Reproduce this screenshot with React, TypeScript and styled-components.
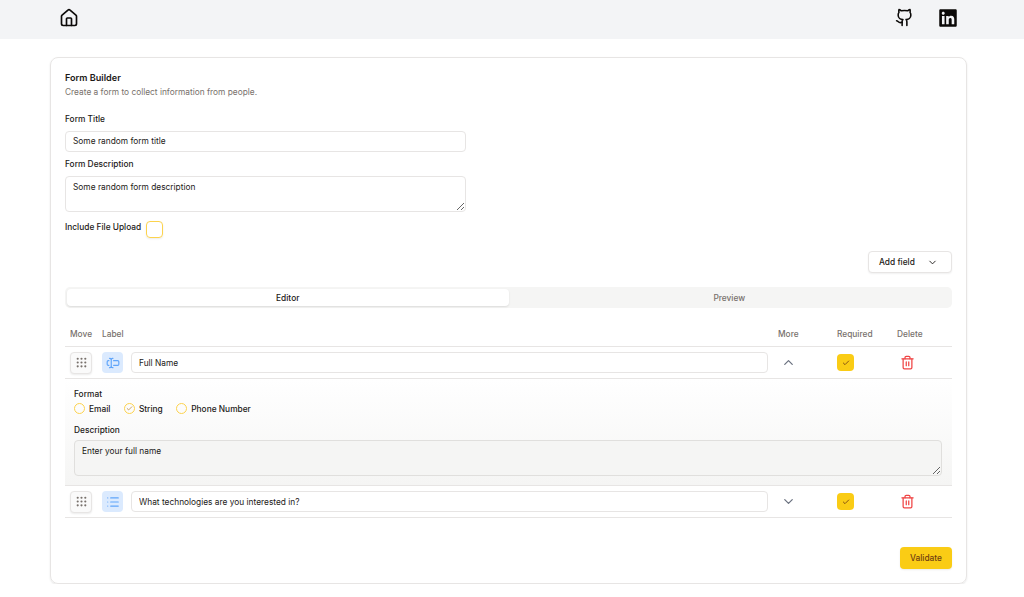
import React from 'react';
import styled, { createGlobalStyle } from 'styled-components';
import { Check, ChevronDown, ChevronUp, Grip, House, List, TextCursorInput, Trash2 } from 'lucide-react';
import { FaLinkedin } from 'react-icons/fa';

const GlobalStyle = createGlobalStyle`
  * { box-sizing: border-box; }
  html, body { margin: 0; padding: 0; background: #fff; }
  body { font-family: Inter, "Liberation Sans", sans-serif; color: #1c1917; }
`;

const GithubIcon = () => (
    <svg width="19" height="19" viewBox="0 0 24 24" fill="none" stroke="#0c0a09" strokeWidth="2" strokeLinecap="round" strokeLinejoin="round">
        <path d="M15 22v-4a4.8 4.8 0 0 0-1-3.5c3 0 6-2 6-5.5.08-1.25-.27-2.48-1-3.5.28-1.15.28-2.35 0-3.5 0 0-1 0-3 1.5-2.64-.5-5.36-.5-8 0C6 2 5 2 5 2c-.3 1.15-.3 2.35 0 3.5A5.403 5.403 0 0 0 4 9c0 3.5 3 5.5 6 5.5-.39.49-.68 1.05-.85 1.65-.17.6-.22 1.23-.15 1.85v4" />
        <path d="M9 18c-4.51 2-5-2-7-2" />
    </svg>
);

const RowEditor = ({ icon, value, open }: { icon: React.ReactNode; value: string; open: boolean }) => (
    <FieldRow>
        <MoveButton><Grip size={13} strokeWidth={2} /></MoveButton>
        <TypeBadge>{icon}</TypeBadge>
        <RowInput defaultValue={value} />
        <MoreCell>{open ? <ChevronUp size={15} /> : <ChevronDown size={15} />}</MoreCell>
        <RequiredCell>
            <RequiredBox><Check size={8} strokeWidth={2.5} /></RequiredBox>
        </RequiredCell>
        <DeleteCell><Trash2 size={15} /></DeleteCell>
    </FieldRow>
);

export default function App() {
    const formats = [
        { label: 'Email', checked: false },
        { label: 'String', checked: true },
        { label: 'Phone Number', checked: false },
    ];

    return (
        <>
            <GlobalStyle />
            <Nav>
                <House size={20} strokeWidth={2} color="#0c0a09" />
                <NavRight>
                    <GithubIcon />
                    <FaLinkedin size={20} color="#0c0a09" />
                </NavRight>
            </Nav>
            <Card>
                <Title>Form Builder</Title>
                <Subtitle>Create a form to collect information from people.</Subtitle>
                <FormTitleLabel>Form Title</FormTitleLabel>
                <TextInput defaultValue="Some random form title" />
                <FormDescLabel>Form Description</FormDescLabel>
                <TextArea defaultValue="Some random form description" />
                <UploadRow>
                    <Label>Include File Upload</Label>
                    <UploadBox />
                </UploadRow>
                <AddRow>
                    <AddButton>Add field <ChevronDown size={11} /></AddButton>
                </AddRow>
                <Tabs>
                    <Tab $active>Editor</Tab>
                    <Tab>Preview</Tab>
                </Tabs>
                <HeaderRow>
                    <span>Move</span>
                    <span>Label</span>
                    <span />
                    <span>More</span>
                    <span>Required</span>
                    <span>Delete</span>
                </HeaderRow>
                <RowEditor icon={<TextCursorInput size={14} />} value="Full Name" open />
                <Details>
                    <Label>Format</Label>
                    <RadioGroup>
                        {formats.map((format) => (
                            <RadioItem key={format.label}>
                                <Radio>{format.checked && <Check size={7} strokeWidth={2} />}</Radio>
                                {format.label}
                            </RadioItem>
                        ))}
                    </RadioGroup>
                    <DetailsLabel>Description</DetailsLabel>
                    <DetailsArea defaultValue="Enter your full name" />
                </Details>
                <RowEditor icon={<List size={14} />} value="What technologies are you interested in?" open={false} />
                <Footer>
                    <ValidateButton>Validate</ValidateButton>
                </Footer>
            </Card>
        </>
    );
}

const Nav = styled.nav`
  height: 39px;
  background: #f3f4f6;
  padding: 8px 66px 0 59px;
  display: flex;
  justify-content: space-between;
  align-items: flex-start;
`;

const NavRight = styled.div`
  display: flex;
  gap: 24px;
`;

const Card = styled.main`
  width: 917px;
  height: 527px;
  margin: 18px 0 0 50px;
  padding: 14px 14px 0;
  border: 1px solid #e7e5e4;
  border-radius: 8px;
  box-shadow: 0 1px 2px rgba(0, 0, 0, 0.1);
`;

const Title = styled.h1`
  margin: 0;
  font-size: 9.1px;
  line-height: 12px;
  font-weight: 600;
`;

const Subtitle = styled.p`
  margin: 1px 0 0;
  font-size: 8.35px;
  line-height: 14px;
  color: #78716c;
`;

const Label = styled.label`
  display: block;
  font-size: 8.35px;
  line-height: 12px;
  font-weight: 500;
`;

const FormTitleLabel = styled(Label)`
  margin-top: 14px;
`;

const FormDescLabel = styled(Label)`
  margin-top: 6px;
`;

const TextInput = styled.input`
  display: block;
  width: 401px;
  height: 21px;
  margin-top: 6px;
  padding: 0 7px 1px;
  border: 1px solid #e7e5e4;
  border-radius: 4px;
  background: #fff;
  font: 8.35px Inter, sans-serif;
  color: #1c1917;
  outline: none;
`;

const TextArea = styled.textarea`
  display: block;
  width: 401px;
  height: 36px;
  margin-top: 6px;
  padding: 4px 7px;
  border: 1px solid #e7e5e4;
  border-radius: 4px;
  background: #fff;
  font: 8.35px/12px Inter, sans-serif;
  color: #1c1917;
  outline: none;
`;

const UploadRow = styled.div`
  display: flex;
  align-items: flex-start;
  gap: 5px;
  margin-top: 9px;
`;

const UploadBox = styled.span`
  width: 17px;
  height: 17px;
  border: 1px solid #fcd34d;
  border-radius: 4px;
  box-shadow: 0 1px 2px rgba(0, 0, 0, 0.08);
`;

const AddRow = styled.div`
  display: flex;
  justify-content: flex-end;
  margin-top: 13px;
`;

const AddButton = styled.button`
  display: flex;
  align-items: center;
  justify-content: space-between;
  width: 84px;
  height: 22px;
  padding: 0 13px 0 10px;
  border: 1px solid #e7e5e4;
  border-radius: 4px;
  background: #fff;
  box-shadow: 0 1px 2px rgba(0, 0, 0, 0.06);
  font: 500 8.35px Inter, sans-serif;
  color: #1c1917;
`;

const Tabs = styled.div`
  display: grid;
  grid-template-columns: 1fr 1fr;
  height: 21px;
  margin-top: 14px;
  padding: 2px;
  border-radius: 5px;
  background: #f5f5f4;
`;

const Tab = styled.div<{ $active?: boolean }>`
  display: flex;
  align-items: center;
  justify-content: center;
  border-radius: 4px;
  font-size: 8.35px;
  font-weight: 500;
  color: ${(p) => (p.$active ? '#1c1917' : '#78716c')};
  background: ${(p) => (p.$active ? '#fff' : 'transparent')};
  box-shadow: ${(p) => (p.$active ? '0 1px 2px rgba(0,0,0,.1)' : 'none')};
`;

const HeaderRow = styled.div`
  display: grid;
  grid-template-columns: 32px 29px 647px 59px 60px 55px;
  align-items: end;
  height: 39px;
  padding: 0 0 6px 5px;
  border-bottom: 1px solid #e7e5e4;
  font-size: 8.35px;
  line-height: 12px;
  font-weight: 500;
  color: #78716c;
`;

const FieldRow = styled.div`
  display: grid;
  grid-template-columns: 32px 29px 637px 69px 60px 55px;
  align-items: center;
  height: 32px;
  padding: 0 0 0 5px;
  border-bottom: 1px solid #e7e5e4;
`;

const MoveButton = styled.span`
  display: flex;
  align-items: center;
  justify-content: center;
  width: 22px;
  height: 22px;
  border: 1px solid #e7e5e4;
  border-radius: 4px;
  background: #fafafa;
  box-shadow: 0 1px 2px rgba(0, 0, 0, 0.08);
  color: #78716c;
`;

const TypeBadge = styled.span`
  display: flex;
  align-items: center;
  justify-content: center;
  width: 21px;
  height: 21px;
  border-radius: 4px;
  background: #dbeafe;
  color: #60a5fa;
`;

const RowInput = styled.input`
  width: 637px;
  height: 21px;
  padding: 0 7px;
  border: 1px solid #e7e5e4;
  border-radius: 4px;
  background: #fff;
  font: 8.35px Inter, sans-serif;
  color: #1c1917;
  outline: none;
`;

const MoreCell = styled.span`
  display: flex;
  justify-content: flex-start;
  padding-left: 13px;
  color: #6b7280;
`;

const RequiredCell = styled.span`
  display: flex;
`;

const RequiredBox = styled.span`
  display: flex;
  align-items: center;
  justify-content: center;
  width: 17px;
  height: 17px;
  border-radius: 4px;
  background: #facc15;
  color: #713f12;
`;

const DeleteCell = styled.span`
  display: flex;
  padding-left: 3px;
  color: #ef4444;
`;

const Details = styled.section`
  height: 107px;
  padding: 9px 9px 0;
  border-bottom: 1px solid #e7e5e4;
  background: linear-gradient(#fff, #f5f5f4);
`;

const RadioGroup = styled.div`
  display: flex;
  gap: 13.5px;
  margin-top: 3px;
`;

const RadioItem = styled.span`
  display: flex;
  align-items: center;
  gap: 4px;
  font-size: 8.35px;
  font-weight: 500;
`;

const Radio = styled.span`
  display: flex;
  align-items: center;
  justify-content: center;
  width: 11px;
  height: 11px;
  border: 1px solid #fcd34d;
  border-radius: 50%;
  color: #a16207;
`;

const DetailsLabel = styled(Label)`
  margin-top: 10px;
`;

const DetailsArea = styled.textarea`
  display: block;
  width: 868px;
  height: 36px;
  margin-top: 4px;
  padding: 4px 7px;
  border: 1px solid #e0dfdd;
  border-radius: 4px;
  background: #f5f5f4;
  font: 8.35px/12px Inter, sans-serif;
  color: #1c1917;
  outline: none;
`;

const Footer = styled.div`
  display: flex;
  justify-content: flex-end;
  margin-top: 29px;
`;

const ValidateButton = styled.button`
  width: 52px;
  height: 22px;
  padding: 0;
  border: 0;
  border-radius: 4px;
  background: #facc15;
  box-shadow: 0 1px 2px rgba(0, 0, 0, 0.08);
  font: 500 8.35px Inter, sans-serif;
  color: #713f12;
`;
